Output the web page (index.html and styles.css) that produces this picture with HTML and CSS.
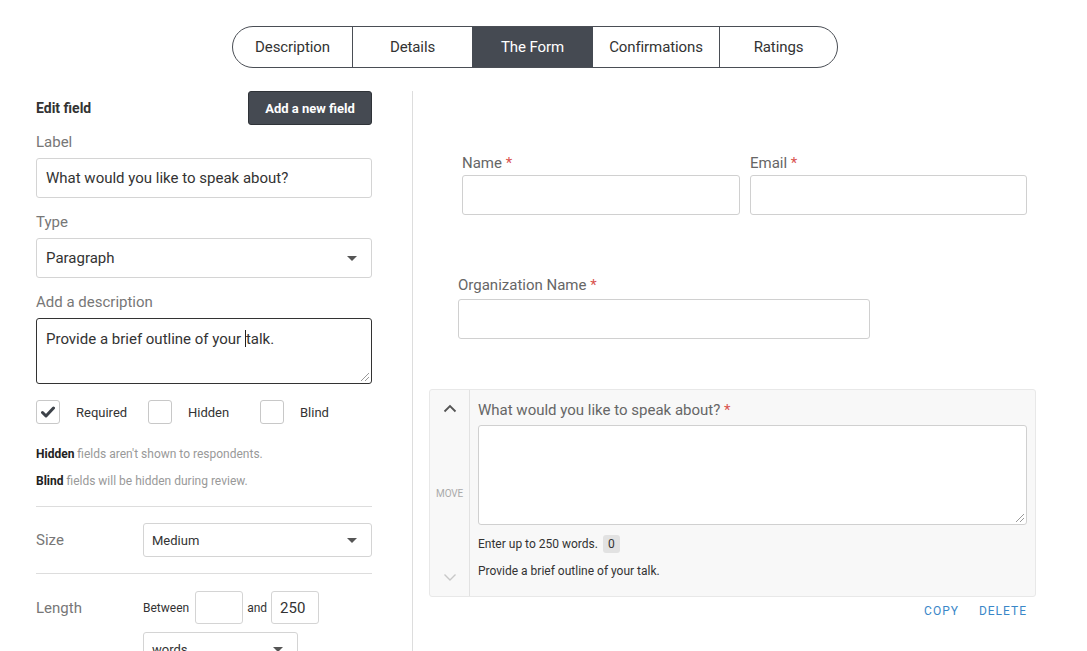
FILE: index.html
```html
<!DOCTYPE html>
<html>
<head>
<meta charset="utf-8">
<link rel="stylesheet" href="styles.css">
</head>
<body>
<div class="page">
  <nav class="tabs-wrap">
    <div class="tabs">
      <div class="tab t1">Description</div>
      <div class="tab t2">Details</div>
      <div class="tab t3 active">The Form</div>
      <div class="tab t4">Confirmations</div>
      <div class="tab t5">Ratings</div>
    </div>
  </nav>
  <div class="main">
    <aside class="editor">
      <div class="ed-head">
        <div class="ed-title">Edit field</div>
        <button class="btn-dark">Add a new field</button>
      </div>
      <div class="lbl">Label</div>
      <div class="input big">What would you like to speak about?</div>
      <div class="lbl">Type</div>
      <div class="input big select">Paragraph<span class="caret"></span></div>
      <div class="lbl">Add a description</div>
      <div class="input big textarea focus">Provide a brief outline of your&nbsp;<span class="cursor"></span>talk.<span class="grip"></span></div>
      <div class="checks">
        <div class="check"><span class="box"><svg width="14" height="12" viewBox="0 0 14 12"><path d="M1.5 6.5 L5 10 L12.5 2" fill="none" stroke="#3d4249" stroke-width="3" stroke-linecap="round" stroke-linejoin="round"/></svg></span>Required</div>
        <div class="check"><span class="box"></span>Hidden</div>
        <div class="check"><span class="box"></span>Blind</div>
      </div>
      <p class="note"><b>Hidden</b> fields aren't shown to respondents.</p>
      <p class="note"><b>Blind</b> fields will be hidden during review.</p>
      <div class="row size-row">
        <div class="row-lbl">Size</div>
        <div class="input small select grow">Medium<span class="caret"></span></div>
      </div>
      <div class="row len-row">
        <div class="row-lbl">Length</div>
        <div class="len">
          <div class="len-line">
            <span class="tiny">Between</span>
            <div class="input num"></div>
            <span class="tiny">and</span>
            <div class="input num">250</div>
          </div>
          <div class="input small select words">words<span class="caret"></span></div>
        </div>
      </div>
    </aside>
    <section class="preview">
      <div class="pair">
        <div class="field">
          <div class="flbl">Name <span class="req">*</span></div>
          <div class="finput"></div>
        </div>
        <div class="field">
          <div class="flbl">Email <span class="req">*</span></div>
          <div class="finput"></div>
        </div>
      </div>
      <div class="org">
        <div class="flbl">Organization Name <span class="req">*</span></div>
        <div class="finput"></div>
      </div>
      <div class="card">
        <div class="mover">
          <svg width="14" height="9" viewBox="0 0 14 9"><path d="M1.5 7.5 L7 2 L12.5 7.5" fill="none" stroke="#555" stroke-width="1.8"/></svg>
          <span class="move">MOVE</span>
          <svg width="14" height="9" viewBox="0 0 14 9"><path d="M1.5 1.5 L7 7 L12.5 1.5" fill="none" stroke="#c8c8c8" stroke-width="1.4"/></svg>
        </div>
        <div class="card-body">
          <div class="flbl">What would you like to speak about? <span class="req">*</span></div>
          <div class="finput tarea"><span class="grip"></span></div>
          <div class="hint">Enter up to 250 words. <span class="badge">0</span></div>
          <div class="hint desc">Provide a brief outline of your talk.</div>
        </div>
      </div>
      <div class="actions"><span>COPY</span><span>DELETE</span></div>
    </section>
  </div>
</div>
</body>
</html>
```
FILE: styles.css
```css
* { box-sizing: border-box; }
html, body { margin: 0; padding: 0; background: #fff; }
body {
  font-family: "Roboto", "Liberation Sans", sans-serif;
  color: #333;
  overflow: hidden;
  height: 651px;
}
.page { width: 1087px; }
.tabs-wrap { display: flex; justify-content: center; padding-top: 26px; padding-right: 17px; }
.tabs {
  display: flex;
  height: 42px;
  border: 1px solid #4a4e55;
  border-radius: 21px;
  overflow: hidden;
}
.tab {
  display: flex; align-items: center; justify-content: center;
  font-size: 15px; color: #333;
  border-left: 1px solid #4a4e55;
  letter-spacing: -0.1px;
}
.tab:first-child { border-left: none; }
.t1 { width: 119px; }
.t2 { width: 120px; }
.t3 { width: 120px; }
.t4 { width: 127px; }
.t5 { width: 118px; }
.tab.active { background: #454a52; color: #fff; border-left-color: #454a52; }
.tab.active + .tab { border-left-color: #454a52; }

.main { display: flex; margin-top: 23px; }
.editor { width: 336px; margin-left: 36px; padding-bottom: 40px; }
.ed-head { display: flex; justify-content: space-between; align-items: center; }
.ed-title { font-size: 14px; font-weight: bold; color: #333; }
.btn-dark {
  width: 124px; height: 34px;
  background: #454a52; color: #fff; border: 1px solid #2f3338; border-radius: 3px;
  font-family: inherit; font-size: 13px; font-weight: bold;
  padding: 0;
}
.lbl { font-size: 15px; color: #777; margin-top: 7px; height: 25px; line-height: 18px; }
.ed-head + .lbl { margin-top: 8px; }
.input {
  border: 1px solid #d4d4d4; border-radius: 3px; background: #fff;
  position: relative;
  display: flex; align-items: center;
}
.input.big { height: 40px; padding: 0 9px; font-size: 15px; color: #333; margin-bottom: 15px; }
.input.select { padding-right: 30px; }
.caret {
  position: absolute; right: 14px; top: 50%; margin-top: -2px;
  width: 0; height: 0;
  border-left: 5px solid transparent; border-right: 5px solid transparent;
  border-top: 5px solid #555;
}
.input.textarea { height: 66px; align-items: flex-start; padding-top: 11px; border-color: #333; margin-bottom: 16px; }
.cursor { display: inline-block; width: 1px; height: 17px; background: #222; vertical-align: -3px; margin-right: 0; }
.grip {
  position: absolute; right: 2px; bottom: 2px; width: 8px; height: 8px;
  background: linear-gradient(135deg, transparent 45%, #999 45%, #999 52%, transparent 52%, transparent 70%, #999 70%, #999 77%, transparent 77%);
}
.checks { display: flex; height: 24px; }
.check { display: flex; align-items: center; font-size: 13px; color: #333; width: 112px; }
.box {
  width: 24px; height: 24px; border: 1px solid #c8c8c8; border-radius: 3px; background: #fff;
  display: inline-flex; align-items: center; justify-content: center;
  margin-right: 16px;
}
.note { font-size: 12px; color: #999; margin: 0; line-height: 14px; }
.checks + .note { margin-top: 23px; }
.note + .note { margin-top: 13px; }
.note b { color: #222; }
.row { display: flex; align-items: center; border-top: 1px solid #ddd; }
.size-row { margin-top: 18px; height: 67px; }
.row-lbl { width: 107px; font-size: 15px; color: #777; }
.input.small { height: 34px; font-size: 13px; padding: 0 8px; color: #333; }
.grow { flex: 1; }
.len-row { align-items: flex-start; padding-top: 17px; }
.len-row .row-lbl { margin-top: 8px; }
.len-line { display: flex; align-items: center; height: 33px; }
.tiny { font-size: 12px; color: #333; }
.input.num { width: 48px; height: 33px; margin: 0 4px 0 4px; font-size: 15px; padding: 0 8px; }
.tiny:first-child + .input.num { margin-left: 6px; }
.words { width: 155px; margin-top: 8px; }

.preview {
  border-left: 1px solid #ddd;
  margin-left: 40px;
  width: 624px;
  padding-top: 64px;
  padding-left: 16px;
  height: 560px;
}
.pair { display: flex; gap: 10px; padding-left: 33px; }
.pair .field { width: 278px; }
.flbl { font-size: 15px; color: #666; height: 20px; line-height: 16px; }
.req { color: #d9534f; }
.finput { height: 40px; border: 1px solid #d0d0d0; border-radius: 3px; background: #fff; position: relative; }
.pair .finput { width: 278px; }
.pair .field:last-child .finput { width: 277px; }
.org { margin-top: 62px; padding-left: 29px; }
.org .flbl { height: 22px; }
.org .finput { width: 412px; }
.card {
  margin-top: 50px;
  display: flex;
  width: 607px; height: 208px;
  background: #f8f8f8;
  border: 1px solid #e8e8e8;
  border-radius: 3px;
}
.mover {
  width: 40px; border-right: 1px solid #e2e2e2;
  display: flex; flex-direction: column; align-items: center; justify-content: space-between;
  padding: 14px 0 14px;
}
.move { font-size: 10px; color: #aaa; letter-spacing: -0.2px; margin-top: 0; }
.card-body { flex: 1; padding: 12px 8px 0 8px; }
.card-body .flbl { height: 23px; }
.tarea { width: 549px; height: 100px; }
.hint { font-size: 12px; color: #333; margin-top: 10px; display: flex; align-items: center; height: 18px; }
.badge { background: #e2e2e2; border-radius: 3px; padding: 0 5px; height: 18px; line-height: 18px; margin-left: 5px; }
.hint.desc { margin-top: 9px; }
.actions {
  width: 607px; display: flex; justify-content: flex-end; gap: 20px;
  padding-right: 9px; margin-top: 7px;
  font-size: 12px; color: #3a87c8; letter-spacing: 1px;
}
```
